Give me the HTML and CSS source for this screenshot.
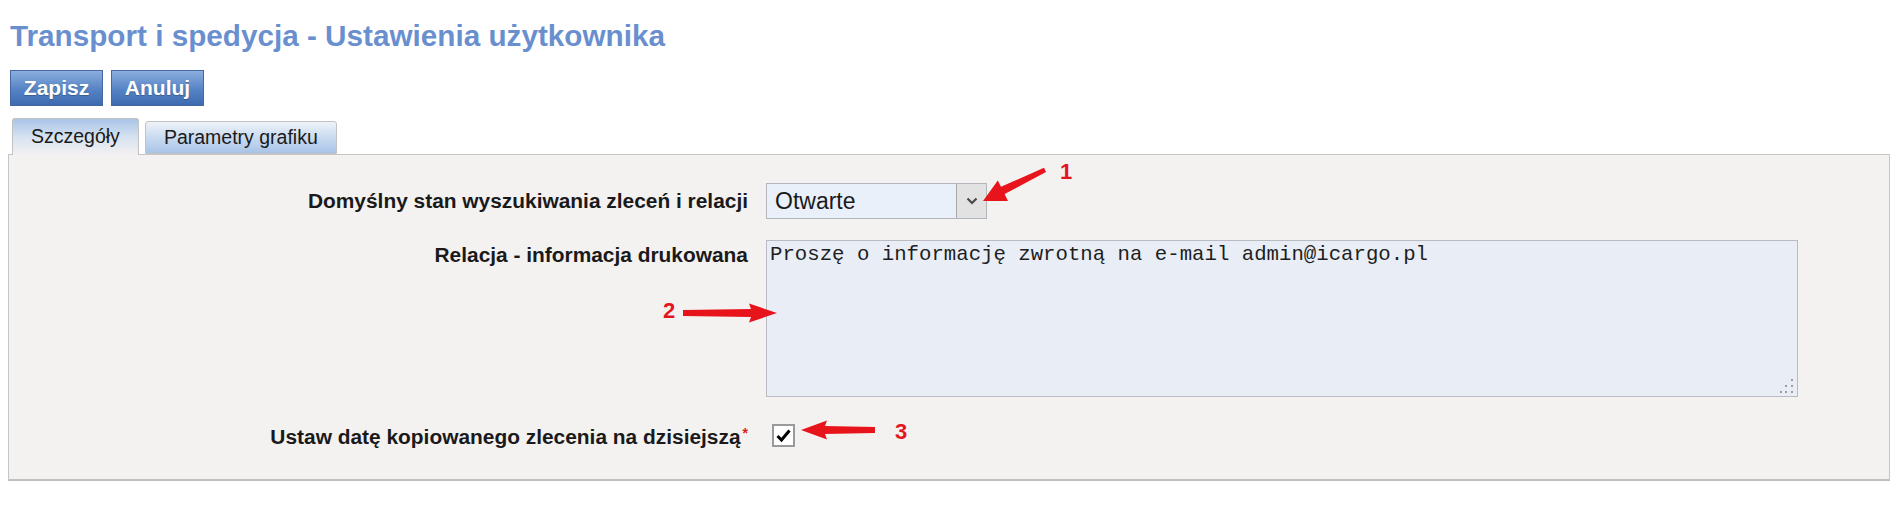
FILE: index.html
```html
<!DOCTYPE html>
<html lang="pl">
<head>
    <meta charset="UTF-8">
    <title>Transport i spedycja - Ustawienia użytkownika</title>
    <link rel="stylesheet" href="styles.css">
</head>
<body>
    <div class="page">
        <h1 class="title">Transport i spedycja - Ustawienia użytkownika</h1>

        <div class="toolbar">
            <button class="btn">Zapisz</button>
            <button class="btn">Anuluj</button>
        </div>

        <div class="tabs">
            <div class="tab tab-active">Szczegóły</div>
            <div class="tab">Parametry grafiku</div>
        </div>

        <div class="panel">
            <div class="form">
                <label class="form-label">Domyślny stan wyszukiwania zleceń i relacji</label>
                <div class="select">
                    <span class="select-value">Otwarte</span>
                    <span class="select-btn">
                        <svg width="12" height="8" viewBox="0 0 12 8"><path d="M1.5 1.5 L6 6 L10.5 1.5" fill="none" stroke="#4a4a4a" stroke-width="2.2"/></svg>
                    </span>
                </div>

                <label class="form-label label-top">Relacja - informacja drukowana</label>
                <div class="textarea-wrap">
                    <textarea class="textarea">Proszę o informację zwrotną na e-mail admin@icargo.pl</textarea>
                    <svg class="grip" width="16" height="16" viewBox="0 0 16 16">
                        <rect x="12" y="1" width="2" height="2" fill="#9c9c9c"/>
                        <rect x="6" y="7" width="2" height="2" fill="#9c9c9c"/>
                        <rect x="12" y="7" width="2" height="2" fill="#9c9c9c"/>
                        <rect x="1" y="13" width="2" height="2" fill="#9c9c9c"/>
                        <rect x="6" y="13" width="2" height="2" fill="#9c9c9c"/>
                        <rect x="12" y="13" width="2" height="2" fill="#9c9c9c"/>
                    </svg>
                </div>

                <label class="form-label row-check">Ustaw datę kopiowanego zlecenia na dzisiejszą<span class="required">*</span></label>
                <div class="row-check">
                    <span class="checkbox">
                        <svg width="17" height="15" viewBox="0 0 17 15"><path d="M2.5 8 L6.5 12 L14.5 2.5" fill="none" stroke="#000" stroke-width="3"/></svg>
                    </span>
                </div>
            </div>
        </div>

        <!-- red annotation arrows drawn over the screenshot -->
        <svg class="annotations" width="1892" height="516" viewBox="0 0 1892 516">
            <polygon points="1046,172 1004.6,194 1008,201 983,201 997.8,180.4 1001,186.8 1044,167.8" fill="#e8141b"/>
            <text x="1060" y="179" class="note-num">1</text>

            <polygon points="683,310 751,309 749,303.5 777,313 749,322.5 751,317 683,316" fill="#e8141b"/>
            <text x="663" y="318" class="note-num">2</text>

            <polygon points="875,427 825,426 827,420.5 801,430 827,439.5 825,434 875,433" fill="#e8141b"/>
            <text x="895" y="439" class="note-num">3</text>
        </svg>
    </div>
</body>
</html>
```

FILE: styles.css
```css
* {
    margin: 0;
    padding: 0;
    box-sizing: border-box;
}

body {
    font-family: "Liberation Sans", Arial, sans-serif;
    background: #fff;
    color: #1a1a1a;
}

.page {
    position: relative;
    width: 1892px;
    height: 516px;
    padding: 19px 2px 0 8px;
}

.title {
    margin: 0 0 17px 2px;
    font-size: 29.7px;
    line-height: 34px;
    font-weight: bold;
    color: #6a8fcf;
}

.toolbar {
    display: flex;
    gap: 8px;
    margin: 0 0 12px 2px;
}

.btn {
    height: 36px;
    width: 93px;
    font-family: "Liberation Sans", Arial, sans-serif;
    font-size: 21px;
    font-weight: bold;
    color: #fff;
    background: linear-gradient(#8caee0, #5583c4 55%, #3d6bb0);
    border: 1px solid #4568a2;
    text-shadow: 0 1px 1px rgba(0,0,0,0.25);
}

.tabs {
    display: flex;
    align-items: flex-end;
    gap: 6px;
    margin-left: 4px;
}

.tab {
    height: 33px;
    padding: 0 18px;
    font-size: 19.5px;
    line-height: 31px;
    color: #1a1a1a;
    border: 1px solid #c2c2c2;
    border-radius: 3px 3px 0 0;
    background: linear-gradient(#eef2f8, #c9dbf0 50%, #a9c4e8);
}

.tab-active {
    position: relative;
    z-index: 1;
    height: 37px;
    margin-bottom: -1px;
    line-height: 34px;
    border-bottom: none;
    background: linear-gradient(#a9c4e8, #d6e2f0 50%, #f4f1f1);
}

.panel {
    background: #f4f1f1;
    border: 1px solid #c6c6c6;
    border-bottom: 2px solid #c0c0c0;
    padding: 28px 0 30px;
}

.form {
    display: grid;
    grid-template-columns: 739px 1fr;
    column-gap: 18px;
    row-gap: 21px;
    align-items: center;
}

.form-label {
    text-align: right;
    font-size: 20.9px;
    font-weight: bold;
    line-height: 24px;
    color: #1a1a1a;
}

.label-top {
    align-self: start;
    padding-top: 3px;
}

.row-check {
    margin-top: 3px;
}

.required {
    color: #e02020;
    font-size: 14px;
    vertical-align: 6px;
    margin-left: 2px;
}

.select {
    display: flex;
    width: 221px;
    height: 36px;
    background: #e9f0fa;
    border: 1px solid #b3b6ba;
}

.select-value {
    flex: 1;
    padding-left: 8px;
    font-size: 23px;
    line-height: 34px;
    color: #1a1a1a;
}

.select-btn {
    display: flex;
    align-items: center;
    justify-content: center;
    width: 30px;
    background: #e2e2e2;
    border-left: 1px solid #a9a9a9;
}

.textarea-wrap {
    position: relative;
    width: 1032px;
    height: 157px;
}

.textarea {
    display: block;
    width: 100%;
    height: 100%;
    padding: 2px 3px;
    font-family: "Liberation Mono", "Courier New", monospace;
    font-size: 20.7px;
    line-height: 24px;
    color: #1e1e1e;
    background: #e9eef6;
    border: 1px solid #b8bcc2;
    resize: none;
    outline: none;
}

.grip {
    position: absolute;
    right: 3px;
    bottom: 3px;
}

.checkbox {
    display: flex;
    align-items: center;
    justify-content: center;
    width: 23px;
    height: 23px;
    margin-left: 6px;
    background: #fff;
    border: 2px solid #9a9a9a;
}

.annotations {
    position: absolute;
    left: 0;
    top: 0;
    pointer-events: none;
}

.note-num {
    font-family: "Liberation Sans", Arial, sans-serif;
    font-size: 22px;
    font-weight: bold;
    fill: #e3161e;
}
```
